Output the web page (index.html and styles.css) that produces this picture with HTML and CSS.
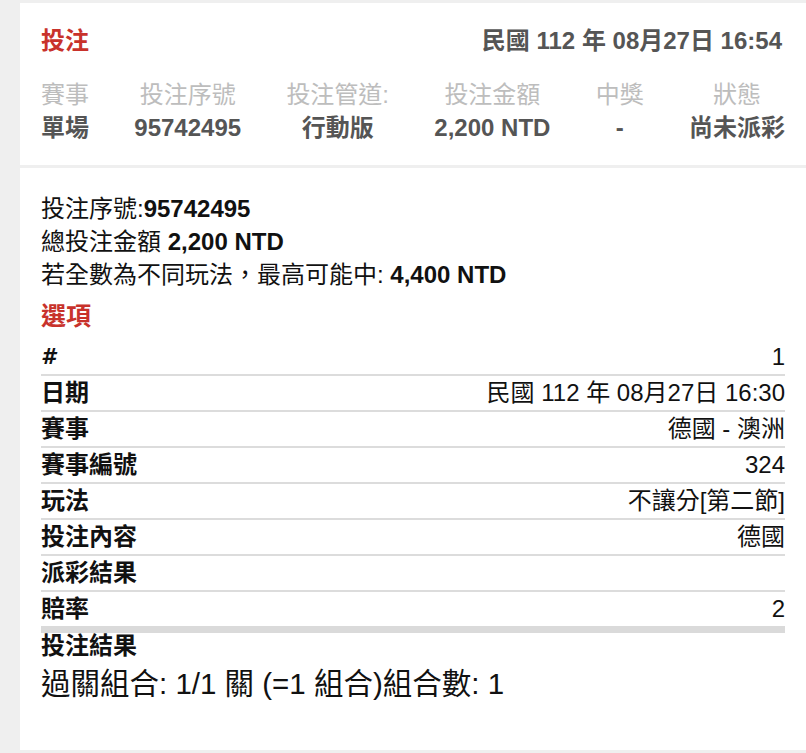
FILE: index.html
```html
<!DOCTYPE html>
<html lang="zh-Hant">

<head>
    <meta charset="UTF-8">
    <meta name="viewport" content="width=device-width, initial-scale=1.0">
    <title>投注</title>
    <link rel="stylesheet" href="styles.css">
</head>

<body>
    <section class="card summary">
        <div class="summary-head">
            <h1 class="title">投注</h1>
            <span class="stamp">民國 112 年 08月27日 16:54</span>
        </div>
        <div class="cols">
            <div class="col">
                <div class="col-label">賽事</div>
                <div class="col-value">單場</div>
            </div>
            <div class="col">
                <div class="col-label">投注序號</div>
                <div class="col-value">95742495</div>
            </div>
            <div class="col">
                <div class="col-label">投注管道:</div>
                <div class="col-value">行動版</div>
            </div>
            <div class="col">
                <div class="col-label">投注金額</div>
                <div class="col-value">2,200 NTD</div>
            </div>
            <div class="col">
                <div class="col-label">中獎</div>
                <div class="col-value">-</div>
            </div>
            <div class="col">
                <div class="col-label">狀態</div>
                <div class="col-value">尚未派彩</div>
            </div>
        </div>
    </section>

    <section class="card detail">
        <p class="line">投注序號:<b>95742495</b></p>
        <p class="line">總投注金額 <b>2,200 NTD</b></p>
        <p class="line">若全數為不同玩法，最高可能中: <b>4,400 NTD</b></p>

        <h2 class="section-title">選項</h2>
        <div class="picks">
            <div class="pick-row"><span class="pick-key hash">#</span><span class="pick-val">1</span></div>
            <div class="pick-row"><span class="pick-key">日期</span><span class="pick-val">民國 112 年 08月27日 16:30</span></div>
            <div class="pick-row"><span class="pick-key">賽事</span><span class="pick-val">德國 - 澳洲</span></div>
            <div class="pick-row"><span class="pick-key">賽事編號</span><span class="pick-val">324</span></div>
            <div class="pick-row"><span class="pick-key">玩法</span><span class="pick-val">不讓分[第二節]</span></div>
            <div class="pick-row"><span class="pick-key">投注內容</span><span class="pick-val">德國</span></div>
            <div class="pick-row"><span class="pick-key">派彩結果</span><span class="pick-val"></span></div>
            <div class="pick-row last"><span class="pick-key">賠率</span><span class="pick-val">2</span></div>
        </div>

        <div class="result-label">投注結果</div>
        <div class="combo">過關組合: 1/1 關 (=1 組合)組合數: 1</div>
    </section>
</body>

</html>
```

FILE: styles.css
```css
html,
body {
    margin: 0;
    padding: 0;
    background: #efefef;
}

body {
    padding: 3px 0 3px 20px;
    font-family: "Liberation Sans", "Noto Sans CJK TC", sans-serif;
    color: #111;
}

.card {
    background: #fff;
    padding: 0 21px;
}

.summary {
    padding-top: 22px;
    padding-bottom: 21px;
    margin-bottom: 3px;
}

.summary-head {
    display: flex;
    justify-content: space-between;
    align-items: center;
    height: 32px;
}

.title {
    margin: 0;
    font-size: 24px;
    line-height: 32px;
    font-weight: bold;
    color: #c8322b;
}

.stamp {
    font-size: 24px;
    line-height: 32px;
    font-weight: bold;
    color: #555;
    margin-right: 3px;
}

.cols {
    display: flex;
    justify-content: space-between;
    margin-top: 21px;
}

.col {
    text-align: center;
    font-size: 24px;
    line-height: 33px;
}

.col-label {
    color: #bdbdbd;
}

.col-value {
    color: #555;
    font-weight: bold;
}

.detail {
    padding-top: 24px;
    padding-bottom: 49px;
}

.line {
    margin: 0;
    font-size: 24px;
    line-height: 33px;
}

.section-title {
    margin: 9px 0 0;
    font-size: 25px;
    line-height: 33px;
    font-weight: bold;
    color: #c8322b;
}

.picks {
    margin-top: 7px;
}

.pick-row {
    display: flex;
    justify-content: space-between;
    font-size: 24px;
    line-height: 34px;
    border-bottom: 2px solid #dcdcdc;
}

.pick-row.last {
    border-bottom: 7px solid #dadada;
}

.pick-key {
    font-weight: bold;
}

.hash {
    font-family: "DejaVu Sans", sans-serif;
    font-size: 21px;
    font-style: italic;
}

.result-label {
    font-size: 24px;
    line-height: 26px;
    font-weight: bold;
}

.combo {
    margin-top: 8px;
    font-size: 29.5px;
    line-height: 34px;
}
```
